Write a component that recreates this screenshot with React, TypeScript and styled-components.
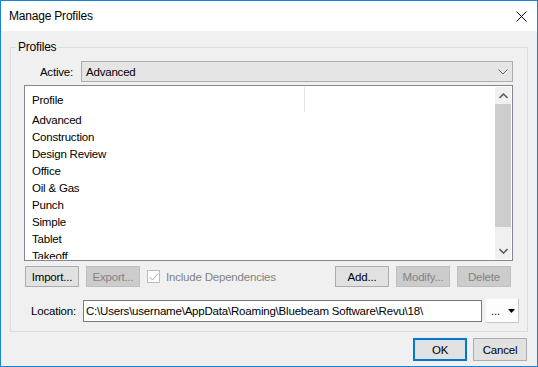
import React from 'react';
import styled, { createGlobalStyle } from 'styled-components';

const GlobalStyle = createGlobalStyle`
  html, body {
    margin: 0;
    padding: 0;
    background: #ffffff;
  }
  body {
    font-family: "Liberation Sans", Arial, sans-serif;
    font-size: 11.5px;
    letter-spacing: -0.2px;
    color: #000000;
  }
  * {
    box-sizing: border-box;
  }
`;

const Window = styled.div`
  width: 538px;
  height: 367px;
  border: 1px solid #1883d7;
  display: flex;
  flex-direction: column;
  background: #f0f0f0;
  overflow: hidden;
`;

const TitleBar = styled.div`
  height: 30px;
  flex: none;
  background: #ffffff;
  display: flex;
  align-items: center;
  justify-content: space-between;
  padding: 0 10px 0 8px;
`;

const TitleText = styled.span`
  font-size: 12px;
  line-height: 14px;
`;

const Body = styled.div`
  flex: 1;
  display: flex;
  flex-direction: column;
  padding: 9px 9px 5px 9px;
`;

const GroupBox = styled.fieldset`
  flex: 1;
  margin: 0;
  padding: 0;
  border: 1px solid #dcdcdc;
  min-width: 0;
`;

const Legend = styled.legend`
  margin-left: 5px;
  padding: 0 2px;
  line-height: 14px;
  font-size: 12px;
`;

const GroupContent = styled.div`
  padding: 7px 14px 0 13px;
  display: flex;
  flex-direction: column;
`;

const FieldRow = styled.div`
  display: flex;
  align-items: center;
`;

const ActiveLabel = styled.label`
  width: 57px;
  flex: none;
  text-align: right;
  padding-right: 8px;
`;

const Combo = styled.div`
  flex: 1;
  height: 21px;
  background: #e5e5e5;
  border: 1px solid #adadad;
  display: flex;
  align-items: center;
  justify-content: space-between;
  padding: 0 4px 0 4px;
`;

const ListView = styled.div`
  margin-top: 3px;
  height: 176px;
  border: 1px solid #828790;
  background: #ffffff;
  display: flex;
  padding: 1px;
  overflow: hidden;
`;

const ListColumn = styled.div`
  flex: 1;
  display: flex;
  flex-direction: column;
  overflow: hidden;
`;

const HeaderRow = styled.div`
  height: 25px;
  flex: none;
  display: flex;
`;

const HeaderCell = styled.div<{ $width?: number }>`
  width: ${(p) => (p.$width ? `${p.$width}px` : 'auto')};
  flex: ${(p) => (p.$width ? 'none' : '1')};
  border-right: ${(p) => (p.$width ? '1px solid #e5e5e5' : 'none')};
  padding-left: 6px;
  display: flex;
  align-items: center;
`;

const ListItem = styled.div`
  height: 17px;
  line-height: 17px;
  flex: none;
  padding-left: 6px;
  white-space: nowrap;
`;

const ScrollBar = styled.div`
  width: 16px;
  flex: none;
  background: #f0f0f0;
  display: flex;
  flex-direction: column;
`;

const ScrollArrow = styled.div`
  height: 17px;
  flex: none;
  display: flex;
  align-items: center;
  justify-content: center;
`;

const ScrollTrack = styled.div`
  flex: 1;
  display: flex;
  flex-direction: column;
`;

const ScrollThumb = styled.div`
  height: 123px;
  background: #cdcdcd;
`;

const ButtonRow = styled.div`
  margin-top: 5px;
  display: flex;
  align-items: center;
  padding: 0 2px 0 1px;
`;

const Button = styled.button<{ $primary?: boolean; $gap?: number }>`
  width: 54px;
  flex: none;
  height: ${(p) => (p.$primary !== undefined ? '23px' : '21px')};
  margin: 0 0 0 ${(p) => p.$gap ?? 0}px;
  padding: 0;
  font-family: "Liberation Sans", Arial, sans-serif;
  font-size: 11.5px;
  letter-spacing: -0.2px;
  color: #000000;
  background: #e1e1e1;
  border: ${(p) => (p.$primary ? '2px solid #0078d7' : '1px solid #adadad')};
  &:disabled {
    background: #cccccc;
    border-color: #bfbfbf;
    color: #838383;
  }
`;

const CheckLabel = styled.label`
  display: flex;
  align-items: center;
  margin-left: 7px;
  color: #838383;
`;

const CheckBox = styled.span`
  width: 13px;
  height: 13px;
  border: 1px solid #bcbcbc;
  background: #ffffff;
  display: flex;
  align-items: center;
  justify-content: center;
  margin-right: 6px;
`;

const Spacer = styled.div`
  flex: 1;
`;

const LocationRow = styled.div`
  margin-top: 11px;
  display: flex;
  align-items: center;
`;

const LocationLabel = styled.label`
  width: 59px;
  flex: none;
  padding-left: 7px;
`;

const PathField = styled.div`
  width: 399px;
  flex: none;
  height: 22px;
  border: 1px solid #7a7a7a;
  background: #ffffff;
  padding-left: 2px;
  display: flex;
  align-items: center;
  white-space: nowrap;
  overflow: hidden;
`;

const BrowseButton = styled.div`
  width: 34px;
  flex: none;
  height: 25px;
  margin-left: 3px;
  background: #fdfdfd;
  border-top: 1px solid #f4f4f4;
  border-left: 1px solid #f4f4f4;
  border-right: 1px solid #c8c8c8;
  border-bottom: 1px solid #c8c8c8;
  display: flex;
  align-items: center;
  justify-content: center;
  gap: 8px;
  padding-left: 2px;
`;

const Footer = styled.div`
  margin-top: 6px;
  display: flex;
  justify-content: flex-end;
  padding-right: 1px;
`;

const profiles = [
  'Advanced',
  'Construction',
  'Design Review',
  'Office',
  'Oil & Gas',
  'Punch',
  'Simple',
  'Tablet',
  'Takeoff',
];

const App: React.FC = () => {
  return (
    <>
      <GlobalStyle />
      <Window>
        <TitleBar>
          <TitleText>Manage Profiles</TitleText>
          <svg width="11" height="11" viewBox="0 0 11 11">
            <path d="M0.5 0.5 L10.5 10.5 M10.5 0.5 L0.5 10.5" stroke="#000" strokeWidth="1" />
          </svg>
        </TitleBar>
        <Body>
          <GroupBox>
            <Legend>Profiles</Legend>
            <GroupContent>
              <FieldRow>
                <ActiveLabel>Active:</ActiveLabel>
                <Combo>
                  <span>Advanced</span>
                  <svg width="10" height="6" viewBox="0 0 10 6">
                    <path d="M0.5 0.5 L5 5 L9.5 0.5" stroke="#606060" strokeWidth="1" fill="none" />
                  </svg>
                </Combo>
              </FieldRow>
              <ListView>
                <ListColumn>
                  <HeaderRow>
                    <HeaderCell $width={279}>Profile</HeaderCell>
                    <HeaderCell />
                  </HeaderRow>
                  {profiles.map((name) => (
                    <ListItem key={name}>{name}</ListItem>
                  ))}
                </ListColumn>
                <ScrollBar>
                  <ScrollArrow>
                    <svg width="9" height="6" viewBox="0 0 9 6">
                      <path d="M0.5 5 L4.5 1 L8.5 5" stroke="#606060" strokeWidth="1.6" fill="none" />
                    </svg>
                  </ScrollArrow>
                  <ScrollTrack>
                    <ScrollThumb />
                  </ScrollTrack>
                  <ScrollArrow>
                    <svg width="9" height="6" viewBox="0 0 9 6">
                      <path d="M0.5 1 L4.5 5 L8.5 1" stroke="#606060" strokeWidth="1.6" fill="none" />
                    </svg>
                  </ScrollArrow>
                </ScrollBar>
              </ListView>
              <ButtonRow>
                <Button>Import...</Button>
                <Button $gap={7} disabled>
                  Export...
                </Button>
                <CheckLabel>
                  <CheckBox>
                    <svg width="9" height="8" viewBox="0 0 9 8">
                      <path d="M0.5 4 L3.5 7 L8.5 1" stroke="#a8a8a8" strokeWidth="1" fill="none" />
                    </svg>
                  </CheckBox>
                  Include Dependencies
                </CheckLabel>
                <Spacer />
                <Button>Add...</Button>
                <Button $gap={7} disabled>
                  Modify...
                </Button>
                <Button $gap={7} disabled>
                  Delete
                </Button>
              </ButtonRow>
              <LocationRow>
                <LocationLabel>Location:</LocationLabel>
                <PathField>C:\Users\username\AppData\Roaming\Bluebeam Software\Revu\18\</PathField>
                <BrowseButton>
                  <span>...</span>
                  <svg width="7" height="4" viewBox="0 0 7 4">
                    <path d="M0 0 L7 0 L3.5 4 Z" fill="#000" />
                  </svg>
                </BrowseButton>
              </LocationRow>
            </GroupContent>
          </GroupBox>
          <Footer>
            <Button $primary>OK</Button>
            <Button $primary={false} $gap={6}>
              Cancel
            </Button>
          </Footer>
        </Body>
      </Window>
    </>
  );
};

export default App;
